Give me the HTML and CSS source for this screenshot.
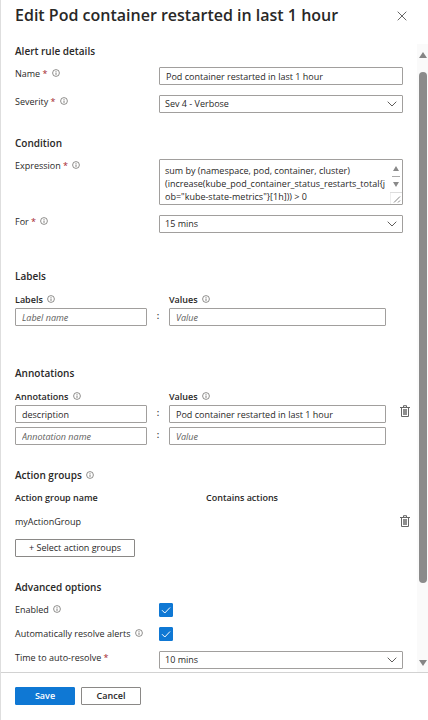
FILE: index.html
```html
<!DOCTYPE html>
<html lang="en">
<head>
<meta charset="utf-8">
<meta name="viewport" content="width=device-width, initial-scale=1">
<title>Edit Pod container restarted in last 1 hour</title>
<link rel="stylesheet" href="styles.css">
</head>
<body>
<svg class="defs" aria-hidden="true">
  <symbol id="info" viewBox="0 0 8 8"><circle cx="4" cy="4" r="3.4" fill="none" stroke="currentColor" stroke-width=".7"/><path d="M4 3.5v2.4M4 2v.8" stroke="currentColor" stroke-width=".8"/></symbol>
  <symbol id="chevron" viewBox="0 0 10 6"><path d="M.7.7 5 5 9.300.7" fill="none" stroke="currentColor" stroke-width="1"/></symbol>
  <symbol id="trash" viewBox="0 0 10 12"><path d="M0 2.500h10M3.500 2.500V.7h3v1.800M1.500 2.500v9h7v-9" fill="none" stroke="#666" stroke-width="1"/><path d="M3 4h4v6H3z" fill="#999"/><path d="M4 4v6M6 4v6" stroke="#777" stroke-width=".6"/></symbol>
</svg>
<main class="panel">
  <header class="header">
    <h1>Edit Pod container restarted in last 1 hour</h1>
    <button class="icon-button close" type="button" aria-label="Close"><svg viewBox="0 0 10 10"><path d="M.7.7 9.300 9.300M9.300.7.7 9.300" stroke="#555" stroke-width=".9"/></svg></button>
  </header>
  <div class="middle">
    <form class="content" id="rule">
      <section>
        <h2>Alert rule details</h2>
        <div class="fields">
          <label for="name">Name <b class="required">*</b> <svg class="info"><use href="#info"/></svg></label>
          <input class="box" id="name" type="text" value="Pod container restarted in last 1 hour">
          <label for="severity">Severity <b class="required">*</b> <svg class="info"><use href="#info"/></svg></label>
          <div class="select"><select class="box" id="severity"><option>Sev 4 - Verbose</option></select><svg class="chevron"><use href="#chevron"/></svg></div>
        </div>
      </section>
      <section class="section">
        <h2>Condition</h2>
        <div class="fields">
          <label for="expression">Expression <b class="required">*</b> <svg class="info"><use href="#info"/></svg></label>
          <div class="expression">
            <textarea class="box" id="expression" spellcheck="false">sum by (namespace, pod, container, cluster)
(increase(kube_pod_container_status_restarts_total{job="kube-state-metrics"}[1h])) &gt; 0</textarea>
            <svg class="textarea-bar" viewBox="0 0 12 44" aria-hidden="true"><path d="M3 11 6 6l3 5zM3 22l3 5 3-5z" fill="#8a8a8a"/><path d="M2 16.500h8" stroke="#aaa"/><path d="M0 44V32.500h12" fill="none" stroke="#ddd"/><path d="M4 42.500 10 36.500M8 42.500l2-2" stroke="#777" stroke-width=".9"/></svg>
          </div>
          <label for="duration">For <b class="required">*</b> <svg class="info"><use href="#info"/></svg></label>
          <div class="select"><select class="box" id="duration"><option>15 mins</option></select><svg class="chevron"><use href="#chevron"/></svg></div>
        </div>
      </section>
      <section class="section labels">
        <h2>Labels</h2>
        <div class="pairs">
          <label class="strong" for="label-name">Labels <svg class="info"><use href="#info"/></svg></label>
          <label class="strong value-head" for="label-value">Values <svg class="info"><use href="#info"/></svg></label>
        </div>
        <div class="pairs">
          <input class="box" id="label-name" type="text" placeholder="Label name"><span class="colon">:</span>
          <input class="box" id="label-value" type="text" placeholder="Value">
        </div>
      </section>
      <section class="section annotations">
        <h2>Annotations</h2>
        <div class="pairs">
          <label class="strong" for="note-name">Annotations <svg class="info"><use href="#info"/></svg></label>
          <label class="strong value-head" for="note-value">Values <svg class="info"><use href="#info"/></svg></label>
        </div>
        <div class="pairs">
          <input class="box" id="note-name" type="text" value="description"><span class="colon">:</span>
          <input class="box" id="note-value" type="text" value="Pod container restarted in last 1 hour">
          <button class="icon-button trash" type="button" aria-label="Delete annotation"><svg><use href="#trash"/></svg></button>
          <input class="box" type="text" placeholder="Annotation name" aria-label="Annotation name"><span class="colon">:</span>
          <input class="box" type="text" placeholder="Value" aria-label="Annotation value">
        </div>
      </section>
      <section class="section">
        <h2>Action groups <svg class="info"><use href="#info"/></svg></h2>
        <table class="groups">
          <thead><tr><th>Action group name</th><th>Contains actions</th><td></td></tr></thead>
          <tbody><tr><td>myActionGroup</td><td></td><td class="action"><button class="icon-button trash" type="button" aria-label="Remove myActionGroup"><svg><use href="#trash"/></svg></button></td></tr></tbody>
        </table>
        <button class="button select-groups" type="button">+ Select action groups</button>
      </section>
      <section class="section">
        <h2>Advanced options</h2>
        <div class="fields">
          <label for="enabled">Enabled <svg class="info"><use href="#info"/></svg></label>
          <div class="check"><input id="enabled" type="checkbox" checked><svg viewBox="0 0 14 14"><path d="M3 7.200 5.800 10 11 4.500"/></svg></div>
          <label for="resolve">Automatically resolve alerts <svg class="info"><use href="#info"/></svg></label>
          <div class="check"><input id="resolve" type="checkbox" checked><svg viewBox="0 0 14 14"><path d="M3 7.200 5.800 10 11 4.500"/></svg></div>
          <label for="resolve-time">Time to auto-resolve <b class="required">*</b></label>
          <div class="select"><select class="box" id="resolve-time"><option>10 mins</option></select><svg class="chevron"><use href="#chevron"/></svg></div>
        </div>
      </section>
    </form>
    <div class="scrollbar" aria-hidden="true">
      <svg viewBox="0 0 8 6"><path d="M0 6 4 0l4 6z"/></svg>
      <div class="track"><div class="thumb"></div></div>
      <svg viewBox="0 0 8 6"><path d="M0 0h8L4 6z"/></svg>
    </div>
  </div>
  <footer class="footer">
    <button class="button primary" type="submit" form="rule">Save</button>
    <button class="button" type="button">Cancel</button>
  </footer>
</main>
</body>
</html>
```
FILE: styles.css
```css
* { box-sizing: border-box; }

body {
  margin: 0;
  background: #fff;
  color: #292827;
  font: 9px/14px "Open Sans", "Noto Sans", sans-serif;
}

h1, h2 { margin: 0; font-weight: 600; }
h1 { font-size: 16px; line-height: 22px; }
h2 { margin-bottom: 9px; font-size: 10px; line-height: 14px; }

input, select, textarea, button { margin: 0; color: inherit; font: inherit; }

.defs { position: absolute; width: 0; height: 0; }

.panel {
  display: flex;
  flex-direction: column;
  height: 100vh;
  border-left: 1px solid #dedede;
}

.header {
  display: flex;
  flex: none;
  align-items: flex-start;
  justify-content: space-between;
  height: 44px;
  padding: 4px 21px 0 14px;
}

.icon-button { padding: 0; border: 0; background: none; }
.icon-button svg { display: block; width: 10px; height: 12px; }
.close { margin-top: 7px; }
.close svg { height: 10px; }

.middle { display: flex; flex: 1; min-height: 0; }

.content {
  flex: 1;
  min-width: 0;
  overflow: hidden;
  padding: 0 7px 0 14px;
}

.section { margin-top: 23px; }
.labels { margin-top: 36px; }
.annotations { margin-top: 40px; }

.fields {
  display: grid;
  grid-template-columns: 144px 1fr;
  row-gap: 10px;
  align-items: start;
  margin-right: 7px;
}

label { display: block; white-space: nowrap; }
.strong { font-weight: 600; }
.required { color: #a4262c; font-weight: 400; }
.info { width: 8px; height: 8px; margin-left: 2px; color: #605e5c; }

.box {
  display: block;
  width: 100%;
  height: 18px;
  padding: 0 6px;
  border: 1px solid #a19f9d;
  border-radius: 1px;
  background: #fff;
}
.box::placeholder { color: #605e5c; font-style: italic; opacity: 1; }

.select { position: relative; }
.select .box { padding: 0 5px; appearance: none; }
.chevron {
  position: absolute;
  top: 6px;
  right: 6px;
  width: 10px;
  height: 6px;
  color: #605e5c;
  pointer-events: none;
}

.expression { position: relative; }
.expression .box {
  height: 46px;
  padding: 4px 14px 0 5px;
  overflow: hidden;
  line-height: 13px;
  resize: none;
  word-break: break-all;
}
.textarea-bar { position: absolute; top: 1px; right: 1px; width: 12px; height: 44px; }

.pairs {
  display: grid;
  grid-template-columns: 132px 22px 1fr 24px;
  row-gap: 4px;
  margin-top: 1px;
}
h2 + .pairs { margin-top: 10px; }
.value-head { grid-column: 3; }
.colon { font-weight: 600; line-height: 16px; text-align: center; }
.pairs .box:first-child, .trash + .box { grid-column: 1; }
.pairs .trash { align-self: start; justify-self: end; }

.groups { width: 100%; border-collapse: collapse; table-layout: fixed; }
.groups th, .groups td { height: 14px; padding: 0 0 10px; text-align: left; font-weight: 400; }
.groups th { width: 191px; font-weight: 600; }
.groups .action { text-align: right; }
.groups .trash { display: inline-block; vertical-align: top; }

.button {
  min-width: 60px;
  height: 18px;
  padding: 0 8px;
  border: 1px solid #8a8886;
  border-radius: 1px;
  background: #fff;
  line-height: 14px;
}
.select-groups { display: block; width: 120px; }

.check { position: relative; width: 14px; height: 14px; }
.check input {
  display: block;
  width: 14px;
  height: 14px;
  appearance: none;
  border: 1px solid #605e5c;
  border-radius: 1px;
}
.check input:checked { border-color: #0f78d4; background: #0f78d4; }
.check svg {
  position: absolute;
  inset: 0;
  fill: none;
  stroke: #fff;
  pointer-events: none;
}

.scrollbar {
  display: flex;
  flex: none;
  flex-direction: column;
  align-items: center;
  gap: 14px;
  width: 11px;
  padding: 8px 0 6px;
  background: #fafafa;
}
.scrollbar svg { flex: none; width: 8px; height: 6px; fill: #858585; }
.track { display: grid; flex: 1; grid-template-rows: 89% 1fr; width: 8px; }
.thumb { border-radius: 4px; background: #8b8b8b; }

.footer {
  display: flex;
  flex: none;
  gap: 6px;
  height: 48px;
  padding: 14px;
  border-top: 1px solid #d2d2d2;
}
.footer .button { font-weight: 600; }
.footer .primary { border-color: #0f78d4; background: #0f78d4; color: #fff; }
```
